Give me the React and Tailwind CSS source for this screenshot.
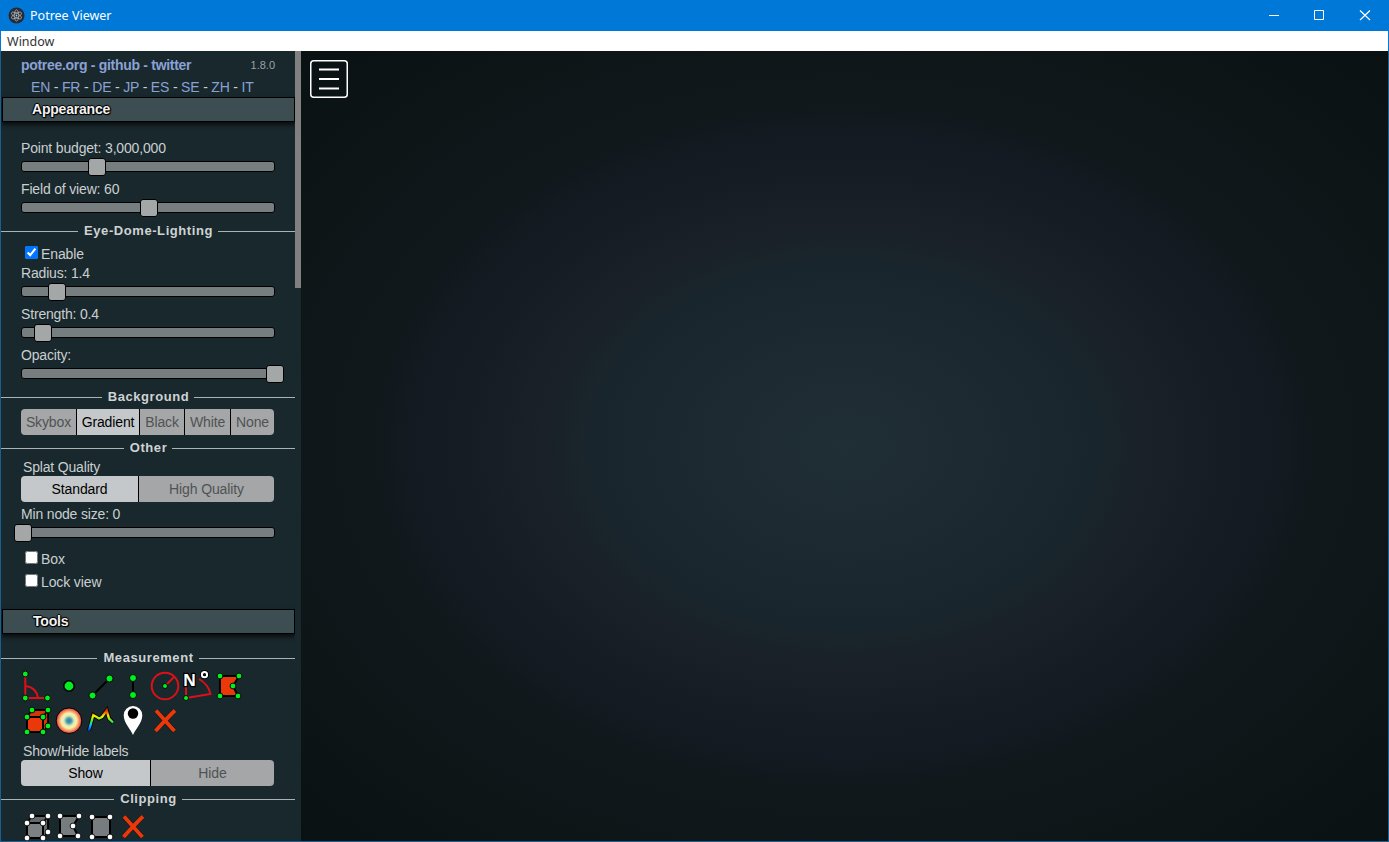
import React from "react";

const GREEN = "#00f020";
const RED = "#dc1018";
const FIRE = "#ea380a";

function Slider({ label, at }) {
  return (
    <div className="h-[41px] pl-5">
      <div className="h-[18px] text-sm leading-[18px] tracking-[-0.17px]">{label}</div>
      <div className="relative mt-1 h-[11px] w-[254px] rounded-[3px] border border-black bg-[#777e80]">
        <div
          className="absolute -top-1 size-[18px] rounded-[3px] border border-black bg-[#a4a7a8]"
          style={{ left: at }}
        />
      </div>
    </div>
  );
}

function Divider({ children }) {
  return (
    <div className="flex h-5 items-center text-[13px] leading-5 font-bold tracking-[0.57px] text-[#ced3d4]">
      <div className="mt-px h-px flex-1 bg-[#a9b2b4]" />
      <span className="pr-[5px] pl-1.5">{children}</span>
      <div className="mt-px h-px flex-1 bg-[#a9b2b4]" />
    </div>
  );
}

function Header({ children, className }) {
  return (
    <h3
      className={
        "ml-px h-[25px] border border-black bg-[#3d4e53] text-sm leading-[22px] font-bold tracking-[-0.2px] text-[#f2f2f2] shadow-[0_3px_4px_#0a0f11] [text-shadow:1px_0_1px_#000,-1px_0_1px_#000,0_1px_1px_#000,0_-1px_1px_#000,1px_1px_1px_#000] " +
        className
      }
    >
      {children}
    </h3>
  );
}

function Segmented({ items, active }) {
  return (
    <div className="ml-5 flex h-[26px] w-[253px] overflow-hidden rounded text-sm tracking-[-0.12px]">
      {items.map(([label, width], i) => (
        <button
          key={label}
          className={
            "shrink-0 border-black text-center leading-[26px] whitespace-nowrap " +
            width +
            (i < items.length - 1 ? " border-r" : "") +
            (i === active ? " bg-[#c5c8ca] text-black" : " bg-[#a4a6a7] text-[#505354]")
          }
        >
          {label}
        </button>
      ))}
    </div>
  );
}

function Check({ label, checked }) {
  return (
    <label className="flex h-[23px] items-center pl-6 text-sm tracking-[-0.12px]">
      <input type="checkbox" defaultChecked={checked} className="-mt-[2px] mr-[3px] size-[13px]" />
      <span className="leading-[18px]">{label}</span>
    </label>
  );
}

function Icon({ children }) {
  return (
    <svg width="32" height="32" viewBox="0 0 32 32" className="shrink-0 overflow-visible" fill="none">
      {children}
    </svg>
  );
}

function Dots({ at, r = 2.9, fill = GREEN }) {
  return at.map(([x, y]) => (
    <circle key={x + "," + y} cx={x} cy={y} r={r} fill={fill} stroke="#000" strokeWidth="0.9" />
  ));
}

function Cube({ face, side, dot }) {
  return (
    <Icon>
      <path d="M6 12L11 5H27V21L22 27H6Z" fill={side} stroke="#000" strokeWidth="1.8" />
      <path d="M6 12H22V27H6Z" fill={face} stroke="#000" strokeWidth="2" />
      <path d="M22 12L27 5" stroke="#000" strokeWidth="1.8" />
      <Dots fill={dot} at={[[11, 5], [27, 5], [6, 12], [22, 12], [27, 21], [6, 27], [22, 27]]} />
    </Icon>
  );
}

function Cross() {
  return (
    <Icon>
      <path d="M7 5.5C13 12 19 19 25.5 26M26 5.5C19 12 13 19 6.5 26" stroke="#000" strokeOpacity=".35" strokeWidth="5" />
      <path d="M7 5.5C13 12 19 19 25.5 26M26 5.5C19 12 13 19 6.5 26" stroke={FIRE} strokeWidth="3.8" />
    </Icon>
  );
}

function Sidebar() {
  return (
    <div className="w-[294px] shrink-0 overflow-hidden text-[#c9cfd1]">
      <div className="flex h-7 items-center pr-5 pl-5 text-sm text-[#8aa1d6]">
        <b className="flex-1 tracking-[-0.3px]">potree.org - github - twitter</b>
        <span className="mt-px text-[11px] text-[#9aa3a6]">1.8.0</span>
      </div>
      <div className="h-[18px] pl-[30px] text-sm leading-4 tracking-[-0.18px] text-[#8aa1d6]">
        {["EN", "FR", "DE", "JP", "ES", "SE", "ZH", "IT"].map((code, i) => (
          <span key={code}>
            {i > 0 && <span className="text-[#c9cfd1]"> - </span>}
            {code}
          </span>
        ))}
      </div>
      <Header className="pl-[29px]">Appearance</Header>
      <div className="pt-[17px]">
        <Slider label="Point budget: 3,000,000" at={66} />
        <Slider label="Field of view: 60" at={118} />
      </div>
      <Divider>Eye-Dome-Lighting</Divider>
      <div className="pt-px">
        <Check label="Enable" checked />
      </div>
      <div className="-mt-px">
        <Slider label="Radius: 1.4" at={25.5} />
        <Slider label="Strength: 0.4" at={12} />
        <Slider label="Opacity:" at={244} />
      </div>
      <Divider>Background</Divider>
      <div className="h-[31px] pt-[2px]">
        <Segmented
          active={1}
          items={[
            ["Skybox", "w-[56px]"],
            ["Gradient", "w-[63px]"],
            ["Black", "w-[45px]"],
            ["White", "w-[46px]"],
            ["None", "w-[43px]"],
          ]}
        />
      </div>
      <Divider>Other</Divider>
      <div className="h-[18px] pl-[22px] text-sm leading-[18px] tracking-[-0.17px]">Splat Quality</div>
      <Segmented active={0} items={[["Standard", "w-[118px]"], ["High Quality", "w-[135px]"]]} />
      <div className="pt-[3px]">
        <Slider label="Min node size: 0" at={-8} />
      </div>
      <div className="pt-px">
        <Check label="Box" />
        <Check label="Lock view" />
      </div>
      <div className="h-4" />
      <Header className="pl-[30px]">Tools</Header>
      <div className="h-3.5" />
      <Divider>Measurement</Divider>
      <div className="mt-0.5 flex w-[294px] flex-wrap gap-y-[3px] pr-12 pl-5">
        <Icon>
          <path d="M4.3 4V28H26.5M5 16C12 17 16 21 17 28" stroke={RED} strokeWidth="2" />
          <Dots at={[[4.3, 4], [4.3, 28], [26.5, 28]]} />
        </Icon>
        <Icon>
          <circle cx="16" cy="16" r="5.2" fill={GREEN} stroke="#000" strokeWidth="1.6" />
        </Icon>
        <Icon>
          <path d="M24.5 8.5L7.5 25.5" stroke="#000" strokeWidth="2" />
          <Dots r={3.5} at={[[24.5, 8.5], [7.5, 25.5]]} />
        </Icon>
        <Icon>
          <path d="M16 8V25" stroke="#000" strokeWidth="2" />
          <Dots r={3.5} at={[[16, 8], [16, 25]]} />
        </Icon>
        <Icon>
          <circle cx="16" cy="16" r="13.3" stroke={RED} strokeWidth="2" />
          <path d="M16 16L25 7" stroke={RED} strokeWidth="2" />
          <Dots r={2.5} at={[[16, 16]]} />
        </Icon>
        <Icon>
          <path d="M5 17V28L29.5 24C28 17 25 13 18 9" stroke={RED} strokeWidth="2" />
          <Dots r={2.5} at={[[5, 28]]} />
          <text x="2" y="15.5" fontFamily="Noto Sans, sans-serif" fontSize="16" fontWeight="700" fill="#fff" stroke="#000" strokeWidth="2.4" paintOrder="stroke">
            N
          </text>
          <circle cx="23.5" cy="4.7" r="2.6" stroke="#000" strokeWidth="4" />
          <circle cx="23.5" cy="4.7" r="2.6" stroke="#fff" strokeWidth="2" />
        </Icon>
        <Icon>
          <path d="M7 6H26L20 16L25 26H7Z" fill={FIRE} stroke="#000" strokeWidth="2" />
          <Dots at={[[7, 6], [26, 6], [20, 16], [7, 26], [25, 26]]} />
        </Icon>
        <Cube face={FIRE} side="#d93306" dot={GREEN} />
        <Icon>
          <defs>
            <radialGradient id="sphere">
              <stop offset="0" stopColor="#2f78b4" />
              <stop offset=".2" stopColor="#4d9fb0" />
              <stop offset=".4" stopColor="#d8ecb0" />
              <stop offset=".58" stopColor="#fdf0b0" />
              <stop offset=".78" stopColor="#f59a62" />
              <stop offset="1" stopColor="#d8383c" />
            </radialGradient>
          </defs>
          <circle cx="16" cy="15.7" r="12.8" fill="url(#sphere)" stroke="#000" strokeWidth="1" />
        </Icon>
        <Icon>
          <defs>
            <linearGradient id="height" x1="0" y1="25" x2="0" y2="5" gradientUnits="userSpaceOnUse">
              <stop offset="0" stopColor="#0848ff" />
              <stop offset=".25" stopColor="#10c8f0" />
              <stop offset=".42" stopColor="#38e838" />
              <stop offset=".7" stopColor="#f8f000" />
              <stop offset=".95" stopColor="#f03010" />
            </linearGradient>
          </defs>
          <path d="M4 25.5L8.3 10L14 13.5L17 12L21.7 5.5L24 13.5L28 17.5" stroke="#000" strokeWidth="4" />
          <path d="M4 25.5L8.3 10L14 13.5L17 12L21.7 5.5L24 13.5L28 17.5" stroke="url(#height)" strokeWidth="2.4" />
        </Icon>
        <Icon>
          <path d="M16 30C14 25 6.7 18 6.7 10.3A9.3 9.3 0 0 1 25.3 10.3C25.3 18 18 25 16 30Z" fill="#fff" />
          <circle cx="16" cy="8.5" r="5.2" fill="#000" />
        </Icon>
        <Cross />
      </div>
      <div className="mt-[5px] h-[18px] pl-[22px] text-sm leading-[18px] tracking-[-0.17px]">Show/Hide labels</div>
      <Segmented active={0} items={[["Show", "w-[130px]"], ["Hide", "w-[123px]"]]} />
      <div className="h-[3px]" />
      <Divider>Clipping</Divider>
      <div className="mt-0.5 flex pl-5">
        <Cube face="#7c8284" side="#63696b" dot="#fff" />
        <Icon>
          <path d="M7 5H26L20 15L25 25H7Z" fill="#777d7f" stroke="#000" strokeWidth="2" />
          <Dots fill="#fff" at={[[7, 5], [26, 5], [20, 15], [7, 25], [25, 25]]} />
        </Icon>
        <Icon>
          <path d="M7 6H25V26H7Z" fill="#777d7f" stroke="#000" strokeWidth="2" />
          <Dots fill="#fff" at={[[7, 6], [25, 6], [7, 26], [25, 26]]} />
        </Icon>
        <Cross />
      </div>
    </div>
  );
}

export default function App() {
  return (
    <div className="flex h-[842px] w-[1389px] flex-col overflow-hidden bg-[#0078d7] font-['Liberation_Sans',Arial,sans-serif]">
      <div className="flex h-[31px] shrink-0 items-center pl-2 font-['Noto_Sans',sans-serif] text-[12.5px] text-white">
        <svg width="17" height="17" viewBox="0 0 17 17" fill="none" className="mr-[5px]">
          <circle cx="8.5" cy="8.5" r="8" fill="#272a37" />
          <g stroke="#a8b4b4" strokeWidth=".8">
            <ellipse cx="8.5" cy="8.5" rx="5.6" ry="2.2" transform="rotate(30 8.5 8.5)" />
            <ellipse cx="8.5" cy="8.5" rx="5.6" ry="2.2" transform="rotate(90 8.5 8.5)" />
            <ellipse cx="8.5" cy="8.5" rx="5.6" ry="2.2" transform="rotate(150 8.5 8.5)" />
          </g>
          <circle cx="8.5" cy="8.5" r=".9" fill="#b5c4c8" />
        </svg>
        <span className="flex-1 pt-0.5">Potree Viewer</span>
        <svg width="138" height="31" viewBox="0 0 138 31" fill="none" stroke="#fff" className="shrink-0">
          <path d="M18 15.5H28" />
          <path d="M63.5 10.5H72.5V19.5H63.5Z" />
          <path d="M109 10.5L119 20M119 10.5L109 20" strokeWidth="1.2" />
        </svg>
      </div>
      <div className="mx-px flex h-5 shrink-0 items-center bg-white pt-0.5 pl-1.5 font-['Noto_Sans',sans-serif] text-[12.5px] text-[#333]">
        Window
      </div>
      <div className="flex min-h-0 flex-1 border border-t-0 border-[#185f94]">
        <div className="flex w-[300px] shrink-0 overflow-hidden bg-[#19282c]">
          <Sidebar />
          <div className="w-1.5 shrink-0">
            <div className="h-[237px] bg-[#808080]" />
          </div>
        </div>
        <div className="flex-1 bg-[radial-gradient(ellipse_farthest-corner_at_center,#202f35_0%,#1c2930_20%,#19252c_33%,#1a2128_39%,#161c23_50%,#131a21_56%,#11181b_63%,#0d1517_80%,#091113_100%)] pt-[9px] pl-[9px]">
          <svg width="38" height="38" viewBox="0 0 38 38" fill="none" stroke="#fff">
            <rect x=".75" y=".75" width="36.5" height="36.5" rx="3" strokeWidth="1.5" />
            <path d="M9 9.5H29M9 19H29M9 28.5H29" strokeWidth="2" />
          </svg>
        </div>
      </div>
    </div>
  );
}
